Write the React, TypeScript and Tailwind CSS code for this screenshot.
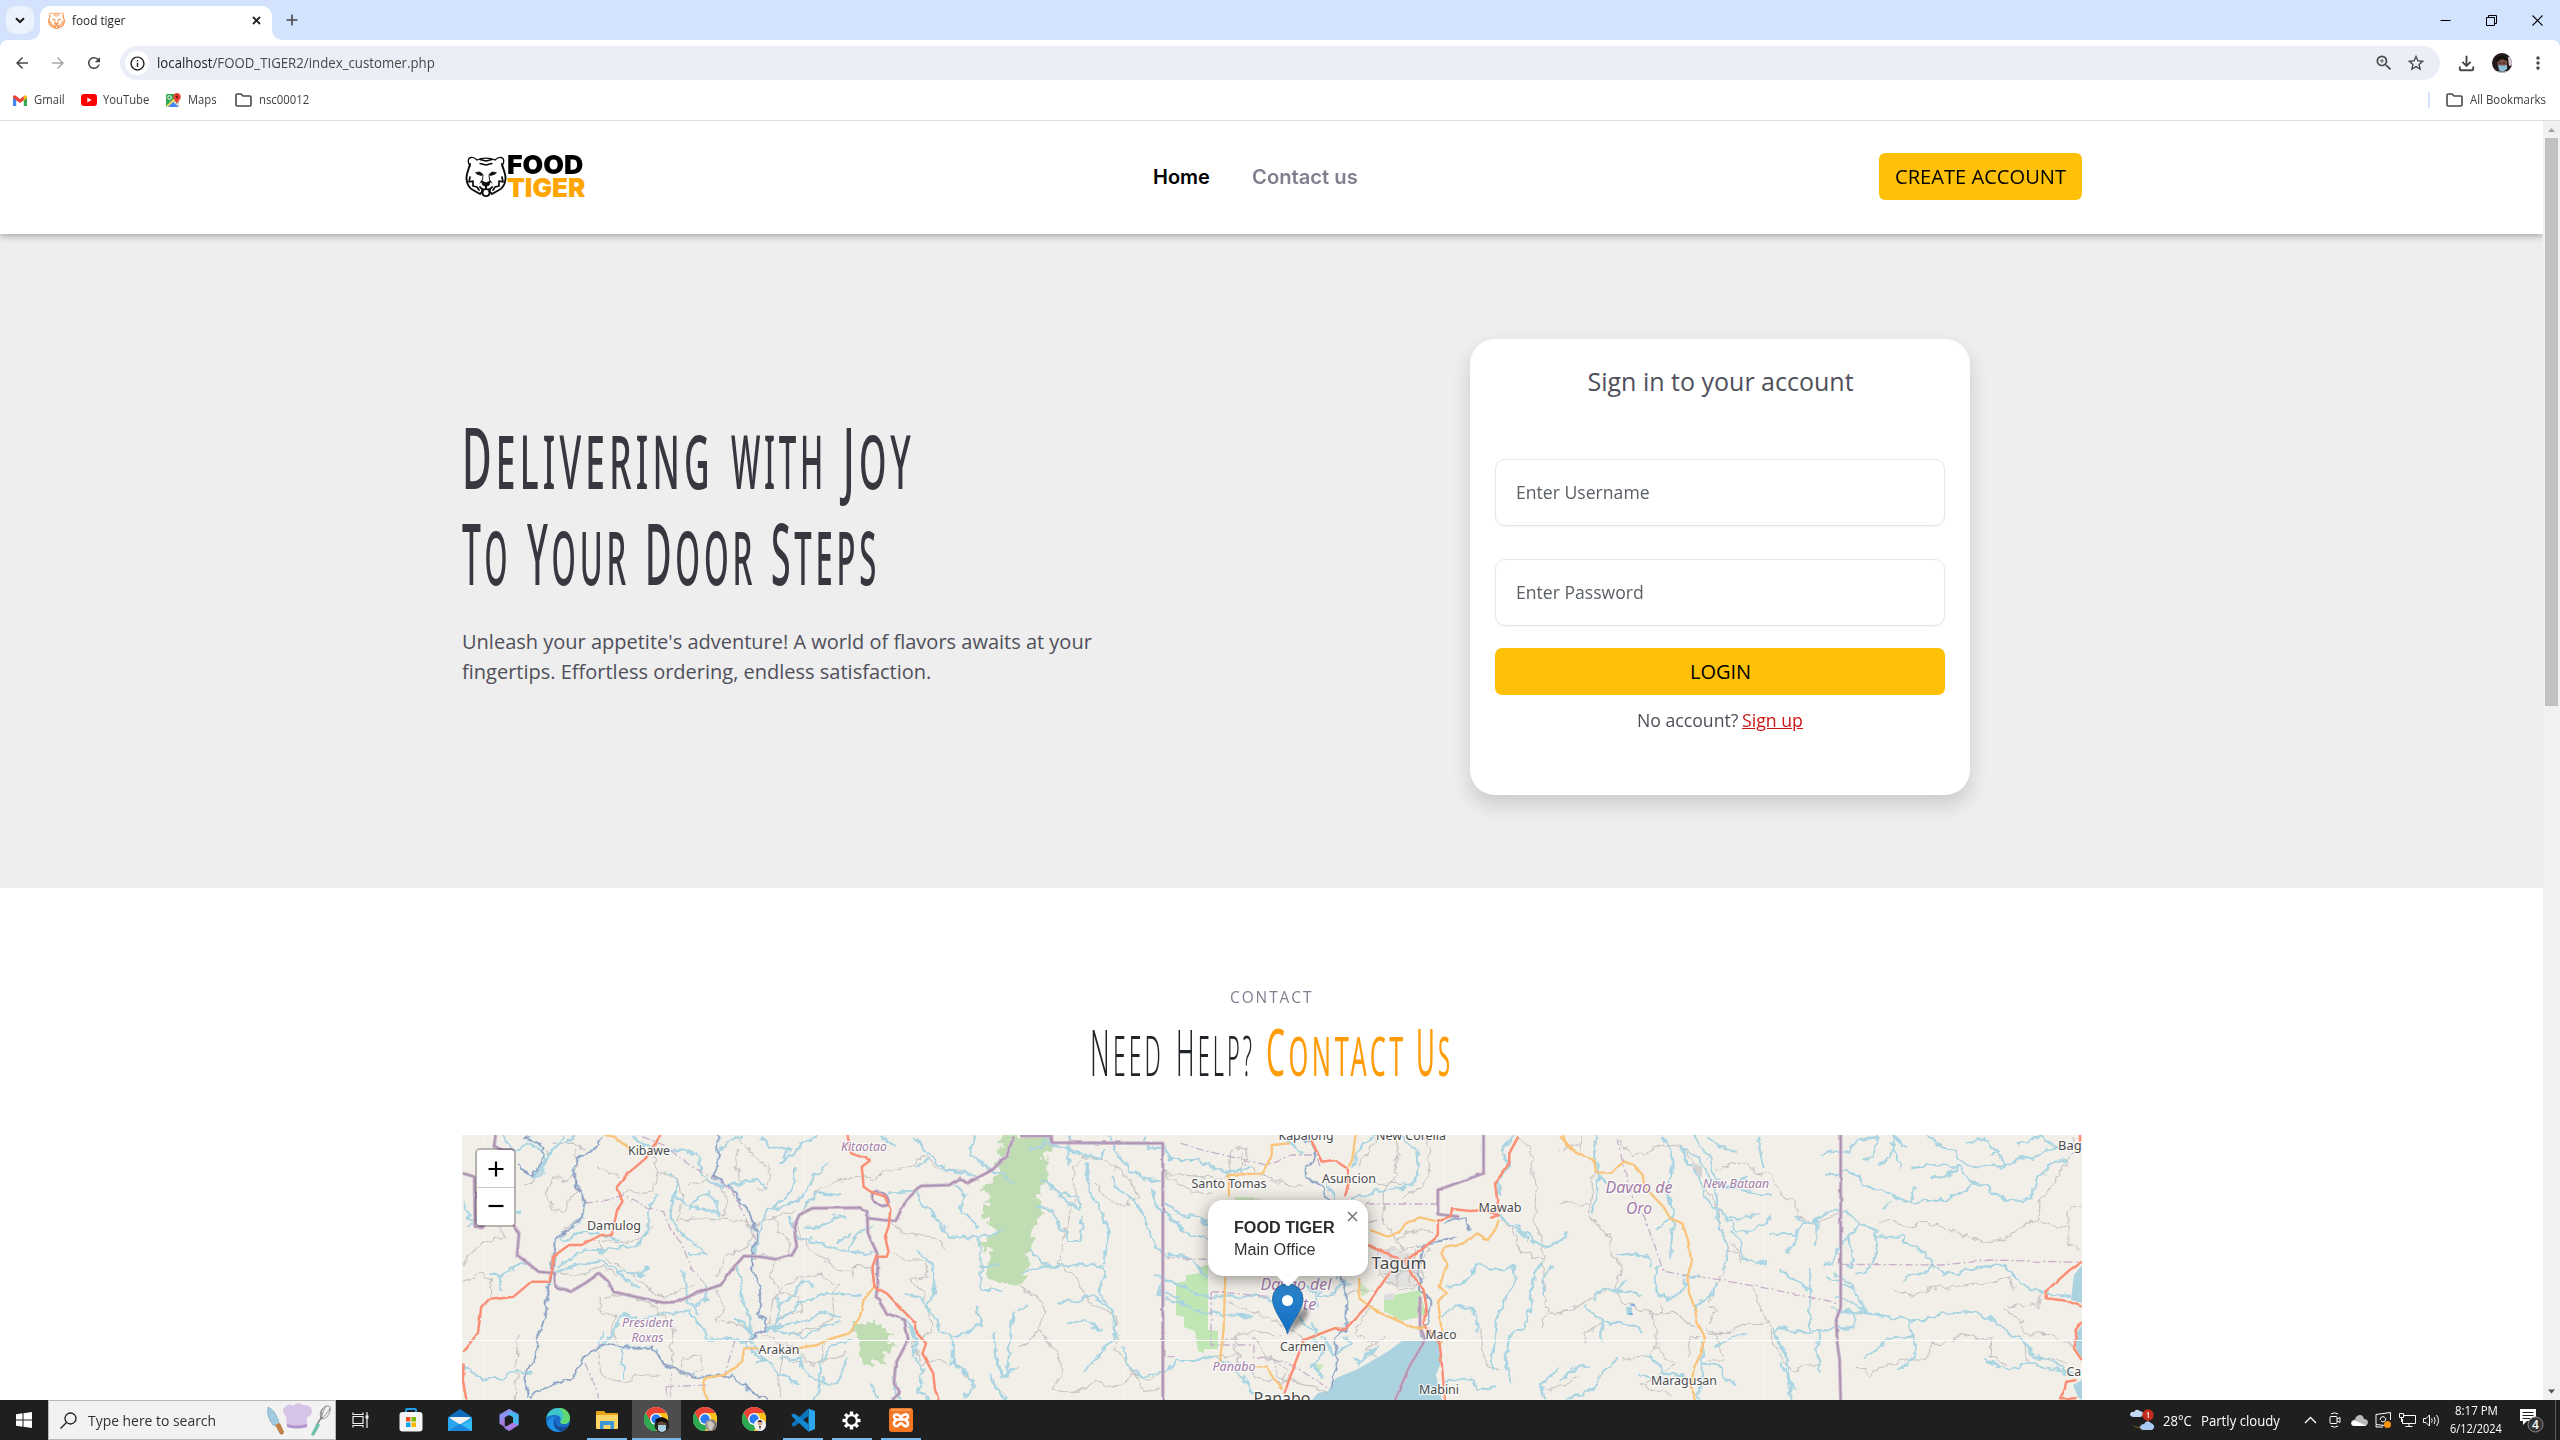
import { useLayoutEffect, useRef, useState, type ReactNode } from "react";
import {
  MdArrowBack,
  MdArrowForward,
  MdRefresh,
  MdStarBorder,
  MdMoreVert,
  MdInfoOutline,
  MdZoomIn,
  MdOutlineFileDownload,
} from "react-icons/md";

/* Text squeezed or stretched horizontally to an exact advance width. */
function Fit({ w, className = "", inner = "", children }: { w: number; className?: string; inner?: string; children: ReactNode }) {
  const ref = useRef<HTMLSpanElement>(null);
  const [s, setS] = useState(1);
  useLayoutEffect(() => {
    if (ref.current && ref.current.offsetWidth) setS(w / ref.current.offsetWidth);
  }, [w]);
  return (
    <span className={"inline-block shrink-0 whitespace-nowrap " + className} style={{ width: w }}>
      <span ref={ref} className={"inline-block origin-left " + inner} style={{ transform: `scaleX(${s})` }}>
        {children}
      </span>
    </span>
  );
}

function TigerHead({ size, color, bold = 1 }: { size: number; color: string; bold?: number }) {
  return (
    <svg width={size} height={size} viewBox="0 0 42 42" fill="none" stroke={color} strokeWidth={1.3 * bold} strokeLinecap="round" strokeLinejoin="round">
      <path d="M5 11C2 6 3 3 6 2.500C9 2 11 4 12 5C17 2.500 25 2.500 30 5C31 4 33 2 36 2.500C39 3 40 6 37 11" />
      <path d="M5 9C4 14 1 19 1.500 24C2 29 4 33 8 35L15 39L18 36M37 9C38 14 41 19 40.500 24C40 29 38 33 34 35L27 39L24 36" strokeWidth={1.9 * bold} />
      <path d="M5 22L4 27L8 26L8 31L12 32L14 35M37 22L38 27L34 26L34 31L30 32L28 35" strokeWidth={1.7 * bold} />
      <path d="M15 4.500L21 6L27 4.500M15 8.500L21 10L27 8.500" />
      <path d="M11 17.500L15 17L18 19.500L16 20.500L12 19ZM31 17.500L27 17L24 19.500L26 20.500L30 19Z" fill={color} strokeWidth={0.8 * bold} />
      <path d="M18 20L17.500 25L15 28M24 20L24.500 25L27 28" strokeWidth={0.9 * bold} />
      <path d="M16.500 26L21 28L25.500 26L24 30L21 31.500L18 30Z" fill={color} strokeWidth={bold} />
      <path d="M21 31V34M15 32C17 35 20 35 21 33.500C22 35 25 35 27 32M17 35L18 40C20 41.500 22 41.500 24 40L25 35" strokeWidth={1.8 * bold} />
    </svg>
  );
}

function FolderIcon({ w = 17 }: { w?: number }) {
  return (
    <svg width={w} height="14" viewBox="0 0 17 14" fill="none" stroke="#474747" strokeWidth="1.6" strokeLinejoin="round">
      <path d="M1 2.200C1 1.500 1.500 1 2.200 1H6L8 3H14.800C15.500 3 16 3.500 16 4.200V11.800C16 12.500 15.500 13 14.800 13H2.200C1.500 13 1 12.500 1 11.800Z" />
    </svg>
  );
}

function BrowserChrome() {
  return (
    <div className="h-[121px] shrink-0 border-b border-[#dfdfdf] bg-[#d3e3fd] font-['Open_Sans',sans-serif] text-[#3c4043]">
      <div className="flex h-10 items-center">
        <div className="ml-[6px] flex h-7 w-7 items-center justify-center rounded-[10px] bg-[#ebf2fe]">
          <svg width="10" height="7" viewBox="0 0 10 7" fill="none" stroke="#1f1f1f" strokeWidth="2">
            <path d="M1 1.200L5 5L9 1.200" />
          </svg>
        </div>
        <svg className="ml-[-4px] mt-auto h-[10px] w-[10px]" viewBox="0 0 10 10">
          <path d="M0 10A10 10 0 0 0 10 0V10Z" fill="#fff" />
        </svg>
        <div className="mt-[6px] flex h-[34px] w-[232px] items-center rounded-t-[10px] bg-white pl-2">
          <div className="mb-[6px]">
            <TigerHead size={17} color="#f68c40" bold={1.4} />
          </div>
          <Fit w={53} className="mb-1 ml-[7px] text-xs leading-4 text-[#1f1f1f]">food tiger</Fit>
          <svg className="mb-[6px] ml-[127px]" width="9" height="9" viewBox="0 0 9 9" stroke="#1f1f1f" strokeWidth="1.8">
            <path d="M1 1L8 8M8 1L1 8" />
          </svg>
        </div>
        <svg className="mt-auto h-[10px] w-[10px]" viewBox="0 0 10 10">
          <path d="M10 10A10 10 0 0 1 0 0V10Z" fill="#fff" />
        </svg>
        <svg className="ml-[4px]" width="12" height="12" viewBox="0 0 12 12" stroke="#474747" strokeWidth="1.6">
          <path d="M6 0.500V11.500M0.500 6H11.500" />
        </svg>
        <div className="ml-auto mr-[17px] flex items-center gap-[35px]">
          <svg width="11" height="11" viewBox="0 0 11 11"><path d="M0.500 5.500H10.500" stroke="#000" /></svg>
          <svg width="11" height="11" viewBox="0 0 11 11" fill="none" stroke="#000">
            <path d="M0.500 2.500H8.500V10.500H0.500ZM2.500 2.500V0.500H10.500V8.500H8.500" />
          </svg>
          <svg width="11" height="11" viewBox="0 0 11 11" stroke="#000" strokeWidth="1.1"><path d="M0.500 0.500L10.500 10.500M10.500 0.500L0.500 10.500" /></svg>
        </div>
      </div>
      <div className="flex h-10 items-center rounded-t-lg bg-white pt-[6px]">
        <MdArrowBack className="ml-[13px] text-[#474747]" size={18} />
        <MdArrowForward className="ml-[18px] text-[#a8a8a8]" size={18} />
        <MdRefresh className="ml-[18px] text-[#474747]" size={18} />
        <div className="ml-[17px] flex h-[34px] w-[2320px] items-center rounded-full bg-[#ebeef7] pl-[5px]">
          <div className="flex h-6 w-6 items-center justify-center rounded-full bg-white">
            <MdInfoOutline size={17} className="text-[#1f1f1f]" />
          </div>
          <Fit w={278} className="ml-[8px] text-sm leading-5 text-[#474747]">
            <span className="text-[#1f1f1f]">localhost</span>/FOOD_TIGER2/index_customer.php
          </Fit>
          <MdZoomIn size={20} className="ml-auto text-[#474747]" />
          <MdStarBorder size={20} className="ml-[12px] mr-[14px] text-[#474747]" />
        </div>
        <MdOutlineFileDownload size={23} className="ml-[15px] text-[#474747]" />
        <svg className="ml-[14px]" width="20" height="20" viewBox="0 0 20 20">
          <clipPath id="face"><circle cx="10" cy="10" r="10" /></clipPath>
          <g clipPath="url(#face)">
            <path d="M0 0H20V20H0Z" fill="#241b1d" />
            <path d="M16 4L20 4V12L17 13Z" fill="#d9c9d4" />
            <path d="M5 7Q10 4 15 7V13H6Z" fill="#7b5145" />
            <path d="M3 5Q10 0 16 6L15 8L10 6L5 9Z" fill="#17110f" />
            <path d="M7 10H9M11 10H13" stroke="#2d1b17" />
            <path d="M6 12Q10 13 15 12L15 16Q11 20 7 17Z" fill="#8fbfd6" />
            <path d="M5 18Q10 19 15 18V20H5Z" fill="#c6dde6" />
          </g>
        </svg>
        <MdMoreVert size={20} className="ml-[16px] text-[#474747]" />
      </div>
      <div className="flex h-10 items-center bg-white text-xs leading-4">
        <svg className="ml-[13px]" width="14" height="11" viewBox="0 0 14 11">
          <path d="M0 1.500V11H3.200V3Z" fill="#4285f4" />
          <path d="M14 1.500V11H10.800V3Z" fill="#34a853" />
          <path d="M14 1.500Q13 -0.500 10.800 1V5.500L14 3Z" fill="#fbbc04" />
          <path d="M0 1.500Q1 -0.500 3.200 1L7 4L10.800 1V5.200L7 8L3.200 5.200L0 3Z" fill="#ea4335" />
        </svg>
        <Fit w={31} className="ml-[7px]">Gmail</Fit>
        <svg className="ml-4" width="16" height="12" viewBox="0 0 16 12">
          <rect width="16" height="12" rx="3" fill="#f00" />
          <path d="M6.300 3.500V8.500L10.500 6Z" fill="#fff" />
        </svg>
        <Fit w={46} className="ml-[6px]">YouTube</Fit>
        <svg className="ml-[17px]" width="15" height="15" viewBox="0 0 15 15">
          <rect y="1" width="13" height="13" rx="1.500" fill="#34a853" />
          <path d="M0 14L13 2V14Z" fill="#c6d7cf" />
          <path d="M0 13L10 3.500L12 5L3 14Z" fill="#f6d76b" />
          <path d="M2 14L7 9L12.500 14Z" fill="#4285f4" />
          <circle cx="3.500" cy="4.500" r="1.800" fill="none" stroke="#fff" />
          <path d="M11 0A3.800 3.800 0 0 1 14.800 4C14.800 6.500 12 8 11 11C10 8 7.200 6.500 7.200 4A3.800 3.800 0 0 1 11 0Z" fill="#ea4335" />
          <circle cx="11" cy="4" r="1.400" fill="#811411" />
        </svg>
        <Fit w={29} className="ml-[7px]">Maps</Fit>
        <span className="ml-[18px]"><FolderIcon /></span>
        <Fit w={50} className="ml-[7px]">nsc00012</Fit>
        <div className="ml-auto h-4 w-[2px] rounded bg-[#d3e3fd]" />
        <span className="ml-4"><FolderIcon /></span>
        <Fit w={76} className="ml-[7px] mr-[14px]">All Bookmarks</Fit>
      </div>
    </div>
  );
}

function SiteHeader() {
  return (
    <header className="relative z-10 flex h-[113px] shrink-0 items-center bg-white pb-[2px] pl-[465px] shadow-[0_2px_7px_rgba(0,0,0,0.32)]">
      <div className="flex items-center">
        <div className="mt-[-1px]"><TigerHead size={42} color="#0a0a0a" /></div>
        <div className="mt-[-1px] flex flex-col font-[Inter,sans-serif] text-[26px] font-black leading-[23px]">
          <Fit w={76} className="text-black">FOOD</Fit>
          <Fit w={78} className="text-[#ffa500]">TIGER</Fit>
        </div>
      </div>
      <nav className="ml-[568px] flex items-center font-[Inter,sans-serif] text-xl font-semibold">
        <Fit w={57} className="text-black">Home</Fit>
        <Fit w={106} className="ml-[42px] text-[#7f7f90]">Contact us</Fit>
      </nav>
      <button className="ml-[521px] flex h-[47px] w-[203px] items-center justify-center rounded-md bg-[#ffc107] font-['Open_Sans',sans-serif] text-xl text-black">
        <Fit w={171}>CREATE ACCOUNT</Fit>
      </button>
    </header>
  );
}

/* One word of the narrow hand-lettered headings. */
function HeroWord({ w, ml, big, children }: { w: number; ml: number; big?: boolean; children: string }) {
  return (
    <span style={{ marginLeft: ml }}>
      <Fit w={w} inner={big ? "first-letter:text-[85px] first-letter:leading-[0]" : ""}>{children}</Fit>
    </span>
  );
}

function HelpWord({ w, ml, children }: { w: number; ml: number; children: string }) {
  return (
    <span className="shrink-0" style={{ marginLeft: ml }}>
      <Fit w={w} inner="first-letter:text-[65px] first-letter:leading-[0]">{children}</Fit>
    </span>
  );
}

function Hero() {
  return (
    <section className="flex h-[654px] shrink-0 items-start bg-[#eeeeee] font-['Open_Sans',sans-serif]">
      <div className="ml-[462px] mt-[179px] w-[1008px]">
        <h1 className="font-['Noto_Sans',sans-serif] text-[74px] font-medium uppercase leading-[96px] tracking-[0.12em] text-[#37373f]">
          <span className="flex h-24 items-baseline">
            <HeroWord w={252} ml={0} big>Delivering</HeroWord>
            <HeroWord w={96} ml={17}>with</HeroWord>
            <HeroWord w={72} ml={16} big>Joy</HeroWord>
          </span>
          <span className="flex h-24 items-baseline">
            <HeroWord w={49} ml={0} big>To</HeroWord>
            <HeroWord w={103} ml={16} big>Your</HeroWord>
            <HeroWord w={111} ml={15} big>Door</HeroWord>
            <HeroWord w={109} ml={15} big>Steps</HeroWord>
          </span>
        </h1>
        <p className="mt-[22px] flex flex-col text-xl leading-[30px] text-[#4f4f5a]">
          <Fit w={630}>Unleash your appetite's adventure! A world of flavors awaits at your</Fit>
          <Fit w={469}>fingertips. Effortless ordering, endless satisfaction.</Fit>
        </p>
      </div>
      <div className="mt-[105px] flex h-[456px] w-[500px] flex-col items-center rounded-[25px] bg-white px-[25px] text-[#4f4f5a] shadow-[0_10px_20px_rgba(0,0,0,0.15)]">
        <h2 className="mt-[23px] h-[38px] text-[25px] leading-[38px]"><Fit w={266} className="ml-[1px]">Sign in to your account</Fit></h2>
        <div className="mt-[59px] flex h-[67px] w-full items-center rounded-[10px] border border-[#e6e6ea] pb-[2px] pl-[20px] text-lg text-[#5b6066] shadow-[0_1px_2px_rgba(0,0,0,0.04)]">
          <Fit w={134}>Enter Username</Fit>
        </div>
        <div className="mt-[33px] flex h-[67px] w-full items-center rounded-[10px] border border-[#e6e6ea] pb-[2px] pl-[20px] text-lg text-[#5b6066] shadow-[0_1px_2px_rgba(0,0,0,0.04)]">
          <Fit w={128}>Enter Password</Fit>
        </div>
        <button className="mt-[22px] flex h-[47px] w-full shrink-0 items-center justify-center rounded-[7px] bg-[#ffc107] text-xl text-black">
          <Fit w={61} className="ml-[1px]">LOGIN</Fit>
        </button>
        <div className="mt-[12px] flex gap-[4px] text-lg leading-[27px]">
          <Fit w={101}>No account?</Fit>
          <Fit w={61} className="text-[#cc1616]" inner="underline">Sign up</Fit>
        </div>
      </div>
    </section>
  );
}

const LEFT = {
  river: [
    "M120 20L140 50L160 60L190 40L230 60L240 90L210 135M260 60L240 90L230 130L200 145M290 20L260 60M320 20L290 40",
    "M10 210L20 260L50 270L20 290M165 250V245M270 320L290 330L340 305L390 310M440 330L390 310",
    "M490 20L520 50L560 60L600 55L660 70L680 130L700 150M790 20L750 40L730 60M840 20L860 50L920 60L900 100L960 40L1000 20",
    "M700 150L740 170L790 155L830 150L860 175M550 195L530 230L525 300L500 345L450 350L390 365L350 350L320 385L275 405",
    "M590 130L610 165L595 200L590 260L620 310L660 340L690 375L640 370M600 200L650 230L690 240L730 255L700 185L670 200L640 240",
    "M270 425L320 410L390 395L440 420L510 435L520 410M440 420L470 460L500 475M620 420L640 520L665 550M690 470L690 510L660 530",
    "M190 395L140 420L110 440L120 480M85 435L120 435M10 705L60 745L120 745L160 720L200 730",
    "M1030 100L990 140L960 200L900 235L860 240L830 330L820 390M940 115L930 180L880 230M1070 195L1000 190L960 230",
    "M920 260L940 320L990 335L1040 350L1080 365L1160 370M970 290L1010 290L1050 260L1080 260M1090 310L1060 340M1160 290L1110 310L1090 360",
    "M860 600L900 585L960 575L1010 550L1060 560M860 600L910 560L950 520L1000 500L1060 490L1120 500M880 600L920 610L970 620L1010 590L1060 575",
    "M890 530L920 510L960 450L990 465M880 600L895 540L890 500M780 400L790 500L810 560L820 620M775 570L810 590L820 640",
    "M400 650L430 600L460 555L510 570L560 550L600 550L640 540L680 600L700 630L760 620L800 640",
    "M390 650L400 610M450 660L460 745M800 640L830 680L870 700L890 730L950 760M900 690L950 680L960 720L1010 760",
    "M1280 360L1320 400L1330 470L1310 530L1350 600L1380 630L1380 700L1420 730L1440 770L1410 805M1450 530L1460 580L1440 600L1380 620M1250 490L1300 510L1310 550",
    "M1200 190L1280 180L1290 220L1340 270L1370 320L1450 320L1460 380L1460 480L1510 480M1390 170L1420 200L1400 230L1450 290M1520 300L1480 320L1450 320M1450 410L1510 400",
    "M1440 20L1430 70L1460 100L1500 130L1550 155M1270 20L1300 60L1350 110L1440 140M1310 90L1280 110M1180 20L1220 50",
    "M1250 570L1280 630L1270 680L1300 720L1280 780L1310 805M1490 610L1500 680L1520 740L1560 710M1485 730L1500 770L1530 805M1550 550L1540 650L1530 740",
    "M1090 630L1040 650L1010 700L1010 760L1060 760L1080 690M1020 750L990 805M820 650L850 690L830 700M1150 760L1170 805M1210 740L1230 805",
  ],
  indigo: [
    "M400 30L370 60L330 90L315 125L330 170L350 210L340 270L290 310L265 330L260 430L245 480L240 560L220 610L210 690L180 740L190 800",
    "M200 800L250 765L310 750L350 680L400 645L460 650L540 650L570 700L620 725L680 745L760 735L810 780L860 805",
    "M720 20L722 100L710 140L760 175L800 230L830 310L820 360L815 420L840 480L840 550L860 590L800 640M180 20L235 50L225 100L200 140L160 105",
  ],
  gray: [
    "M10 400L40 360L80 330L130 325L110 290M10 460L60 430L85 450L90 510M250 60L240 100L210 150L180 170M350 60L320 40L260 40M320 60L330 110L300 150L260 140L240 190L260 240L300 240L310 200L340 180",
    "M380 105L440 140M540 80L550 120L610 150L620 200L610 270L700 265L780 270L820 290L880 260L940 240M550 120L540 180L450 190M640 170L690 150L730 170L750 210L740 260",
    "M770 20L810 60L870 130L860 180L830 180M780 60L770 110L790 150M330 270L290 300M390 330L400 380L460 420L500 450L560 500L600 490L650 460",
    "M400 330L450 340L500 330L540 290M270 425L340 435L400 410L440 440M390 500L390 540L440 560L420 600L450 640M400 505L470 490L530 520L580 570L600 600L590 650L600 720L640 740",
    "M620 710L630 685L670 680L680 710L650 740M590 735L590 800M720 480L740 530L715 570L760 580L800 590M820 300L810 350L740 380L720 440M880 260L890 300L925 330L920 370L890 395L850 370L820 390",
    "M1150 150L1200 120L1260 110L1300 80L1350 120L1400 120L1450 150M960 240L1000 180L1080 145L1150 140M940 280L970 340L990 370L1060 420L1100 430",
    "M850 600L900 560L960 540L950 500L900 490L870 440L880 400M1040 460L1010 430L950 440L900 480L880 510L860 590M1060 460L1040 500L1050 560L1000 590L920 620",
    "M1210 280L1250 310L1310 320L1360 350M1210 370L1240 390L1300 390L1310 440L1260 450L1290 480L1310 530L1320 600M1100 440L1100 410L1150 410L1155 450M840 610L900 640L910 690L890 740L900 800",
    "M910 640L960 680L990 710L1010 690L1020 640M910 690L1000 700L1080 670M1320 600L1270 640L1290 700L1340 690L1400 710L1420 740M390 690L400 740L460 760L500 735L560 740M390 690L390 640L350 680M160 620L155 805",
  ],
  dash: [
    "M350 220L410 210L460 195L520 230L570 245L590 300L620 340L650 420L690 465M770 630L750 700L740 740M580 770L690 765M580 770L580 805M350 700L380 770L385 805M510 20L570 45L630 95L650 110L720 150L760 180M760 180L830 330",
  ],
  red: [
    "M562 15L520 85L470 130L440 170L455 215L440 240L425 315L395 315L340 345L305 345L260 380L258 420L250 455L200 455L150 500L80 510L60 530L50 610L8 665M10 700L8 750L18 810",
    "M1085 15L1095 70L1150 90L1125 110L1130 170L1150 185L1190 200L1205 240L1200 290L1190 320L1200 365L1195 380L1165 380L1155 410L1160 470L1195 490L1230 530L1275 580L1280 610L1305 640L1295 670L1325 730L1330 780L1340 810",
  ],
  orange: ["M405 15L430 20L480 60M1160 470L1130 510L1120 560L1090 610L1040 625L1000 645L945 655M835 655L795 655L790 695L740 735L680 745L685 790L695 810"],
  purple: [
    "M8 130L40 140L42 290L70 290M150 285L165 310L160 375L220 425L265 430L268 470L310 485L350 460L390 430L415 455L430 485L490 500L570 518L610 515L660 490L730 465L760 420L795 378L840 380L885 388L930 375L943 350L935 290L950 255L985 235L1120 233L1140 245L1142 310L1168 370L1170 460L1165 500L1195 550L1245 570L1255 630L1220 700L1215 760L1230 790L1210 810",
    "M1142 265L1185 270L1220 272L1250 210L1290 168L1370 165L1400 145L1420 160L1490 120L1530 80L1550 20M1200 220C1180 240 1150 215 1155 190C1170 175 1200 190 1200 220M100 15L95 50L120 60L150 60",
  ],
};

const MID = {
  river: [
    "M20 60L60 50L80 20M140 20L135 60L140 105M80 40L130 60L190 75L230 85L235 60M250 20L270 70L310 120L350 150L400 155M190 100L190 150L200 200L230 240L250 300L240 370L230 400M60 150L110 190L130 220L170 240L160 200L120 190",
    "M50 230L90 240L110 290L140 330L170 330L175 260M110 410L60 400L30 365M110 410L160 400L230 410L240 440L220 480L260 550L270 610L240 650L210 690L180 720M260 140L265 170L320 210L350 260L360 310L400 370L470 380L520 440",
    "M10 430L50 410L110 410M110 515L170 510L200 490L260 540M130 580L180 570L230 600M0 540L20 530M350 20L360 60L400 50L420 90L500 90L580 130L650 110M370 180L380 230L420 260L480 320L530 325M410 220L460 260L500 260L530 290",
    "M380 430L450 470L480 480L510 500L600 500L690 500L720 540M410 510L460 520L500 545L570 555L650 560M400 440L390 490L450 500M290 650L300 700L340 740L410 725L440 690L500 690L540 680L600 710L620 740L650 790",
    "M730 20L770 50L790 70M1000 20L960 40L930 110M1065 20L1110 60L1115 130L1100 165L1030 180L990 185L930 205M1380 20L1350 60L1370 110L1340 140L1340 200M840 460L840 500L880 490L900 450L920 460",
    "M850 620L870 680L930 640L910 620M820 580L830 630L850 670L820 710L850 740M930 680L950 700L1000 650M1330 250L1380 290L1430 320L1450 350L1500 340L1530 310M1390 280L1420 330M1200 470L1240 460L1280 400L1320 420L1380 410L1390 460L1350 520L1330 580L1320 710",
    "M1460 400L1440 430L1430 510L1420 580L1370 620L1360 680L1375 760M1490 410L1460 450L1470 490M1180 560L1220 530L1260 530L1285 580L1280 605M1190 760L1230 745L1270 750L1275 780L1330 775M1510 710L1490 740L1460 760L1470 805",
    "M800 470L830 480L830 530M780 560L800 590L820 600M860 160L880 200L890 440",
  ],
  indigo: [
    "M790 20L820 50L830 80L795 110L800 140L850 170L860 210M1260 300L1250 270L1210 265L1190 280",
    "M900 440L915 500L910 590L880 640L890 700L870 770M1220 330L1170 330L1130 350L1115 410L1120 480L1150 520L1140 580L1120 600L1135 630",
  ],
  gray: [
    "M150 110L180 80L240 90L310 150L330 200L290 230L240 200L210 160M150 110L155 200L135 270L120 330L110 400L150 440L200 520L270 560L270 660L320 730L360 750L420 720M410 120L420 150L480 180L530 190M590 60L585 130L560 145L410 130",
    "M600 50L640 60L630 100L690 140L730 150M700 150L790 170M620 70L620 130M630 210L680 210M940 160L1020 160L1080 160M950 100L980 50L1000 30M1050 20L1060 60L1050 140L1020 180L1020 280L1050 330L1080 360M980 210L940 260L960 310",
    "M1130 20L1150 60L1145 120L1130 170L1070 200M1390 30L1430 50L1430 100L1450 180L1440 260L1460 330L1465 400L1475 540L1460 600M1160 310L1130 300L1080 310L1060 330M1340 260L1380 300L1400 360L1460 390",
    "M570 510L700 570L750 595L800 625M650 620L700 690L750 720L730 760M600 620L610 690L660 740L730 760M560 640L600 620L650 600L730 620M600 720L620 670L560 680L480 690M0 470L60 510L70 550L50 600L100 660L120 720L90 780L150 790",
    "M150 790L210 750L250 770L290 760L320 730L350 790L400 770M50 600L20 640L0 650M990 520L960 560L940 610L990 640M1020 620L970 660L1000 680M1480 550L1540 540L1560 520M1290 600L1300 700L1340 720M1470 780L1520 770L1560 740",
    "M700 680L720 740L800 760L860 790M920 490L960 480L1000 490L1010 460M1000 400L1010 440L1060 480L1110 470L1130 440L1120 390L1150 360L1110 350L1060 360L1000 360ZM1030 360L1060 440M1080 370L1050 470M1010 410L1120 430M1110 360L1090 460M1000 440L1070 420",
  ],
  dash: [
    "M450 40L510 60L570 75L690 105L760 75L830 75L840 110M410 385L530 388M970 222L1170 222M535 485V645H655V680L710 685L770 710L870 780M535 485L600 490L700 500M410 680H440M1000 270L940 290",
  ],
  red: [
    "M815 30L845 95L880 90L915 115L920 160L910 200M975 345L1075 395L1140 345L1170 315V275L1205 260L1210 237L1260 243L1300 240L1340 255L1315 265M1340 240L1330 160L1370 100L1370 70L1395 20",
    "M1080 400L1100 440L1130 480L1138 530L1130 580L1150 610L1175 640L1180 690L1190 810M1040 420L970 530L910 598L880 595L795 630L770 700L740 790",
  ],
  orange: [
    "M755 40L705 45V75L680 130L585 135V200M575 440L570 600L560 695M660 712H690L710 745L735 775M940 10L930 90L920 110M950 445L950 505L1000 545L1100 592H1140M980 300L1030 320L1060 310L1080 280L1120 262L1170 275",
    "M1340 270L1330 300L1310 330L1280 310L1245 340L1190 350L1180 370L1195 400L1175 470L1195 490L1170 510L1180 600L1180 640M1520 15L1530 45L1568 75",
  ],
  purple: ["M0 18L88 18L90 38L400 40V810M1298 15V130L1170 180V253L1230 260M1135 630L1090 710L1050 810M1135 630L1120 590V500"],
};

const RIGHT = {
  river: [
    "M105 20L100 70L110 120L110 170L95 250M110 140L140 160M300 20L330 80L315 150L320 210L330 260L325 320L320 380M330 260L280 300M350 50L370 100L410 150L420 200L450 240L470 310L490 350L480 400L470 420M350 50L400 80L440 150L460 220",
    "M390 20L430 80L445 130L470 170L610 195M430 20L460 45L510 65M575 20L585 90L595 110M450 230L490 265L540 265L580 250M610 260L570 300L520 305L480 265M500 300L525 340L530 385L600 400M545 135L500 170L470 170",
    "M165 375L220 370L260 385L265 410M285 410L275 480L310 510L350 490L365 455M360 440L400 440M450 460L440 500L390 520L400 545M100 510L120 475L170 480L195 450M120 575L180 580L230 590L240 605M70 530L120 570L120 630M150 480L235 490",
    "M620 610L640 590L700 610L730 605L790 600L800 590L850 595L860 550L810 540M730 420L725 600M750 610L745 660L755 730M640 420L680 450L730 485M610 312L680 312L710 280L750 265L790 240L830 245L870 280L915 300",
    "M690 310L680 340L660 370M745 265L745 310L740 345M680 255L710 280M915 300L920 320L995 320L1000 335L1060 365L1080 400L1120 435L1160 425L1240 410L1280 405L1320 435L1340 465L1400 485L1480 500M920 320L910 400L880 435L860 430M870 280L840 320L850 410L830 412M840 320L810 350L790 400L770 400M1080 400L1060 430L1000 445",
    "M770 140L830 120L870 140L880 165L950 190L1010 220L1060 210L1120 210L1180 180L1195 160L1160 110L1080 105L1020 115M1195 160L1240 170L1300 215L1370 205L1385 150L1430 100L1470 90M1030 175L1020 210M960 215L940 230M1160 110L1120 140L1080 138",
    "M760 75L790 65L840 65L860 35L920 20M920 20L910 85L880 90M930 100L960 80L970 20L1000 50M960 40L990 110M1070 20L1100 45L1150 60L1160 90L1210 110L1290 110L1350 80L1370 90L1390 70L1440 50L1400 20L1330 40M1180 40L1230 25L1270 60L1250 80M1290 110L1270 60",
    "M800 500L860 520L890 550L960 560L1020 575L1090 565L1110 545L1140 550L1200 545L1240 560L1290 600L1350 640L1380 680L1430 690L1470 730M800 430L850 465L865 500L890 550M780 445L860 480M795 535L820 550L890 550M1015 575L1025 620L1035 660L1010 700L980 715M1020 620L960 625L930 650L885 685",
    "M1230 690L1300 715L1370 700L1430 720L1500 730M640 640L660 690L670 810M620 590L640 650M640 700L680 780M450 650L480 630L540 610M410 700L460 705L480 750L510 762M0 750L50 710L80 710M160 690L130 720L100 770L50 800L20 805M250 675L290 710L300 730L370 740M230 735L300 750M415 640L410 740L400 805",
  ],
  indigo: [],
  gray: [
    "M100 30L95 150L85 260L150 330L155 380L180 410L160 470L160 480L110 490L70 520L0 550M0 215L50 225L85 225M0 60L55 40M65 20L60 60M170 30L210 80L240 75L290 50L350 45L380 90L410 160L455 220L465 300L490 340L475 440L450 470L430 530L460 540L430 580",
    "M455 120L500 100L540 100L570 130L615 135L640 190L680 220L690 260L750 280L810 250M490 360L520 370L525 400M500 340L520 360M560 460L580 530L610 580L620 640L650 700L690 725L710 705L750 705",
    "M430 610L490 610L540 580L610 580M290 520L300 550L340 550L360 570L400 600M160 480L190 520L260 545L300 545M265 545L280 600L275 650L330 700L300 730L240 760L260 780L320 790M185 690L250 675L290 650M70 640L75 610L120 580",
    "M860 710L880 710L900 740L930 710L1010 690L1060 690L1080 640L1120 640L1170 610L1220 625L1250 620L1250 680L1290 700M930 270L970 275L1015 295L1060 275L1120 300L1200 325L1230 340L1290 325L1340 290L1390 265L1395 210L1440 150L1460 110L1500 60L1490 20M1390 265L1440 290L1470 290",
    "M1510 225L1475 240L1475 340L1510 365M970 485L1030 500L1080 475L1200 465L1260 455L1305 440L1320 480M1300 530L1390 525L1400 490M1290 540L1340 570L1350 610L1430 615L1500 650M1390 690L1430 680L1470 700M1350 640L1355 700M430 690L470 690L460 620L430 600M370 620L410 620M370 620L380 680",
  ],
  dash: ["M165 25L185 110L210 200L245 260L300 423L370 437L440 445L600 475L815 520M815 403L1110 405L1250 390L1510 397"],
  red: ["M1515 395L1480 420L1410 485V505L1470 512L1515 530M1515 575L1497 600L1500 630L1492 655L1515 690M1500 750L1470 755L1465 780L1452 805H1500M1510 15V35"],
  orange: ["M0 20L40 60L100 95L105 128H150L185 95L215 105L240 135L245 170L300 230L320 265L355 280L372 330L382 400L370 440L375 490L390 530L400 580L418 615L412 665L390 710L380 770L395 810"],
  purple: ["M815 15V530L802 570L805 640L812 690L815 810"],
};

function Sheet({ d, t }: { d: typeof LEFT; t: string }) {
  const set = (paths: string[], stroke: string, width: number, dash?: string) =>
    paths.map((p, i) => (
      <path key={stroke + i} d={p} stroke={stroke} strokeWidth={width} strokeDasharray={dash} vectorEffect="non-scaling-stroke" />
    ));
  return (
    <>
      <g filter="url(#wiggle)">
        <g transform={t} fill="none" strokeLinejoin="round" strokeLinecap="round">
          {set(d.gray, "#c8c6c5", 1.2)}
          {set(d.river, "#a9d4e2", 2.2)}
          {set(d.indigo, "#a9d4e2", 2.6)}
          {set(d.indigo, "#9b9bbf", 1.4)}
        </g>
      </g>
      <g filter="url(#soft)">
        <g transform={t} fill="none" strokeLinejoin="round">
          {set(d.dash, "#c8aeca", 1.3, "8 3 2 3")}
          {set(d.purple, "#ccb8cc", 3.6)}
          {set(d.purple, "#ab90b1", 1.5)}
          {set(d.orange, "#f9c57c", 2.3)}
          {set(d.red, "#fb8f75", 2.5)}
        </g>
      </g>
    </>
  );
}

type Label = [string, number, number, number, number, ("i" | "s")?];
const LABELS: Label[] = [
  ["Kibawe", 187, 16, 42, 13],
  ["Kitaotao", 402, 12, 46, 12.5, "i"],
  ["Damulog", 152, 91, 54, 13],
  ["President", 185.5, 188, 51, 12.5, "i"],
  ["Roxas", 185.5, 203, 32, 12.5, "i"],
  ["Arakan", 317, 215, 41, 13],
  ["Santo Tomas", 767, 49, 75, 13],
  ["Kapalong", 844, 1, 55, 13],
  ["Asuncion", 887, 44, 54, 13],
  ["New Corella", 949, 1, 70, 13],
  ["Mawab", 1038, 73, 43, 13],
  ["Tagum", 937, 128, 55, 17],
  ["Davao del", 834, 150, 71, 15.5, "i"],
  ["Norte", 834, 170, 41, 15.5, "i"],
  ["Carmen", 841, 212, 46, 13],
  ["Panabo", 772, 232, 43, 12.5, "i"],
  ["Maco", 979, 200, 31, 13],
  ["Mabini", 977, 255, 40, 13],
  ["Panabo", 820, 263, 57, 17],
  ["Davao de", 1177, 53, 67, 15.5, "i"],
  ["Oro", 1177, 74, 26, 15.5, "i"],
  ["New Bataan", 1274, 49, 66, 12.5, "i"],
  ["Maragusan", 1222, 246, 66, 13],
  ["Baganga", 1623, 11, 54, 13],
  ["Caraga", 1625, 237, 41, 13],
];

function MapDrawing() {
  return (
    <svg className="block" width="1620" height="265" viewBox="0 0 1620 265">
      <defs>
        <filter id="wiggle" x="0" y="0" width="1620" height="265" filterUnits="userSpaceOnUse">
          <feTurbulence type="fractalNoise" baseFrequency="0.11" numOctaves="2" seed="4" />
          <feDisplacementMap in="SourceGraphic" scale="9" xChannelSelector="R" yChannelSelector="G" />
        </filter>
        <filter id="soft" x="0" y="0" width="1620" height="265" filterUnits="userSpaceOnUse">
          <feTurbulence type="fractalNoise" baseFrequency="0.1" numOctaves="1" seed="6" />
          <feDisplacementMap in="SourceGraphic" scale="3" xChannelSelector="R" yChannelSelector="G" />
        </filter>
        <filter id="jag" x="0" y="-10" width="1620" height="290" filterUnits="userSpaceOnUse">
          <feTurbulence type="fractalNoise" baseFrequency="0.12" numOctaves="2" seed="9" />
          <feDisplacementMap in="SourceGraphic" scale="16" xChannelSelector="R" yChannelSelector="G" />
        </filter>
        <linearGradient id="pin" x1="0" y1="0" x2="0" y2="1">
          <stop offset="0" stopColor="#2e85cb" />
          <stop offset="1" stopColor="#126fc6" />
        </linearGradient>
        <filter id="blur" x="-50%" y="-50%" width="200%" height="200%"><feGaussianBlur stdDeviation="2" /></filter>
      </defs>
      <path d="M0 0H1620V265H0Z" fill="#f2efe9" />
      <g filter="url(#jag)" fill="#c0dcb3">
        <path d="M541 0H590L590 12L582 20L586 40L577 58L580 80L570 95L568 115L565 145L552 152L535 145L524 140L530 118L516 112L532 98L520 75L528 58L518 56L535 38Z" />
        <path d="M388 187L415 188L420 195L432 198L425 206L438 212L420 218L423 230L412 228L402 225L394 215L396 205Z" />
      </g>
      <g fill="#bfe6b3">
        <path d="M714 148L724 146V140L738 138V132L746 130V195L756 196V214L742 214V218L736 216L733 196L722 192V182L714 180Z" />
        <path d="M922 162L958 155L964 180L940 186L922 176Z" />
        <path d="M773 62H792V66H773ZM896 145L908 156L900 162ZM850 228L862 230L856 238Z" opacity=".8" />
        <path d="M922 160L932 158V165H922Z" fill="#dcdcdc" />
      </g>
      <g fill="#aad3df">
        <path d="M962 205H978L980 225L974 240L980 265H850L856 258L866 256L874 243L896 234L925 217L940 206Z" />
        <path d="M1620 130L1612 140L1609 165L1620 168ZM1620 190L1613 200L1615 220L1620 222ZM1620 245L1611 250L1616 262L1620 265Z" />
      </g>
      <g fill="#ddd" opacity=".8">
        <path d="M918 115L950 118L960 135L950 152L935 153L924 143L914 128Z" />
        <path d="M1232 28L1240 32V42L1234 40Z" fill="#ccc" />
      </g>
      <Sheet d={LEFT} t="translate(-2 -5) scale(.357143 .333333)" />
      <Sheet d={MID} t="translate(558 -5) scale(.357143 .333333)" />
      <Sheet d={RIGHT} t="translate(1098 -5) scale(.344388 .333333)" />
      <path d="M1164 172H1170V180H1165Z" fill="#a8d3e2" />
      <path d="M1168 170H1173M1167 179H1171" stroke="#3a8cf0" />
      <path d="M0 205.500H1620" stroke="#fff" />
      <path d="M22.500 0V265M342.500 0V265M662.500 0V265M982.500 0V265M1302.500 0V265" stroke="#fff" opacity=".25" />
      <g fontFamily="'Noto Sans', sans-serif" textAnchor="middle" paintOrder="stroke" strokeLinejoin="round" stroke="#fff" strokeOpacity=".75" strokeWidth="2.5">
        {LABELS.map(([s, x, y, w, size, kind], i) => (
          <text key={i} x={x} y={y + size * 0.33} textLength={w} lengthAdjust="spacingAndGlyphs" fontSize={size} fill={kind ? "#a37ba7" : "#4a4a4a"} fontStyle={kind ? "italic" : "normal"}>
            {s}
          </text>
        ))}
      </g>
      <path d="M826 199L842 186Q850 176 843 172L832 180Z" fill="#000" opacity=".4" filter="url(#blur)" />
      <path d="M825.500 199C824 190 810.500 176 810.500 164A15.200 15.200 0 0 1 841 164C841 176 827 190 825.500 199Z" fill="url(#pin)" stroke="#2a6da6" strokeWidth="1" />
      <circle cx="825.500" cy="165.500" r="5.500" fill="#fff" />
    </svg>
  );
}

function ContactSection() {
  return (
    <section className="flex min-h-0 flex-1 flex-col items-center overflow-hidden bg-white">
      <div className="mt-[97px] h-6 font-['Open_Sans',sans-serif] text-base leading-6 text-[#7f7f90]">
        <Fit w={83} inner="tracking-[2px]">CONTACT</Fit>
      </div>
      <h2 className="mt-[14px] flex h-[63px] w-[363px] shrink-0 items-baseline whitespace-nowrap font-['Noto_Sans',sans-serif] text-[55px] font-light uppercase leading-[63px] tracking-[0.14em] text-[#212529]">
        <HelpWord w={74} ml={0}>Need</HelpWord>
        <HelpWord w={79} ml={12}>Help?</HelpWord>
        <span className="flex shrink-0 items-baseline font-normal text-[#ff9c08]">
          <HelpWord w={141} ml={11}>Contact</HelpWord>
          <HelpWord w={37} ml={9}>Us</HelpWord>
        </span>
      </h2>
      <div className="relative mt-[49px] h-[265px] w-[1620px] shrink-0 overflow-hidden">
        <MapDrawing />
        <div className="absolute left-[13px] top-[13px] h-[79px] w-[41px] rounded-[5px] border-2 border-black/25 bg-clip-padding text-black">
          <div className="flex h-[38px] items-center justify-center rounded-t-[3px] border-b border-[#ccc] bg-white">
            <svg className="ml-px" width="16" height="16" viewBox="0 0 16 16"><path d="M8 0.500V15.500M0.500 8H15.500" stroke="#000" strokeWidth="2.200" /></svg>
          </div>
          <div className="flex h-[37px] items-center justify-center rounded-b-[3px] bg-white pb-px">
            <svg className="ml-px" width="16" height="16" viewBox="0 0 16 16"><path d="M0.500 8H15.500" stroke="#000" strokeWidth="2.200" /></svg>
          </div>
        </div>
        <div className="absolute left-[746px] top-[65px] h-[76px] w-[160px] rounded-[15px] bg-white pl-[26px] pt-[17px] font-['Liberation_Sans',sans-serif] text-base leading-[22px] text-[#333] shadow-[0_3px_16px_rgba(0,0,0,0.4)]">
          <div className="font-bold text-[#2b2b2b]"><Fit w={101}>FOOD TIGER</Fit></div>
          <div><Fit w={82}>Main Office</Fit></div>
          <svg className="absolute left-[139px] top-[11px]" width="11" height="11" viewBox="0 0 11 11" stroke="#757575" strokeWidth="1.500">
            <path d="M1 1L10 10M10 1L1 10" />
          </svg>
          <svg className="absolute left-[68px] top-[75px]" width="24" height="12" viewBox="0 0 24 12"><path d="M0 0H24L14 10Q12 12 10 10Z" fill="#fff" /></svg>
        </div>
      </div>
    </section>
  );
}

function Scrollbar() {
  return (
    <div className="flex w-[17px] shrink-0 flex-col items-center bg-[#f1f1f1]">
      <svg width="17" height="17" viewBox="0 0 17 17"><path d="M5 11H12L8.500 7Z" fill="#a3a3a3" /></svg>
      <div className="h-[568px] w-[13px] bg-[#c1c1c1]" />
      <svg className="mt-auto" width="17" height="17" viewBox="0 0 17 17"><path d="M5 6.500H12L8.500 10.500Z" fill="#505050" /></svg>
    </div>
  );
}

function ChromeLogo({ children }: { children?: ReactNode }) {
  return (
    <svg className="ml-[3px]" width="28" height="26" viewBox="0 0 28 26">
      <circle cx="12" cy="12" r="12" fill="#fff" />
      <path d="M1.600 6A12 12 0 0 0 12 24L17 15L12 12L7 15Z" fill="#2da94f" />
      <path d="M22.400 6A12 12 0 0 1 12 24L17.200 15L12 6Z" fill="#fbc116" />
      <path d="M1.600 6A12 12 0 0 1 22.400 6H12Z" fill="#ea4335" />
      <path d="M1.600 6L6.800 15L12 12V6Z" fill="#ea4335" />
      <path d="M1.600 6A12 12 0 0 0 12 24L6.800 15Z" fill="#2da94f" />
      <circle cx="12" cy="12" r="6" fill="#fff" />
      <circle cx="12" cy="12" r="4.700" fill="#2c7bf2" />
      {children}
    </svg>
  );
}

function TaskItem({ active, running, children }: { active?: boolean; running?: boolean; children: ReactNode }) {
  return (
    <div className={"relative flex h-10 w-[49px] items-center justify-center " + (active ? "bg-[#4d4d4d]" : "")}>
      {children}
      {running && <div className={"absolute bottom-0 h-[2px] bg-[#76b9ed] " + (active ? "inset-x-0" : "left-[4px] right-[5px]")} />}
    </div>
  );
}

function Taskbar() {
  return (
    <footer className="flex h-10 shrink-0 items-center bg-[#1f1f1f] font-['Open_Sans',sans-serif] text-white">
      <div className="flex w-12 items-center justify-center">
        <svg width="16" height="16" viewBox="0 0 16 16" fill="#fff">
          <path d="M0 2.200L6.500 1.300V7.500H0ZM7.500 1.200L16 0V7.500H7.500ZM0 8.500H6.500V14.700L0 13.800ZM7.500 8.500H16V16L7.500 14.800Z" />
        </svg>
      </div>
      <div className="flex h-10 w-[288px] items-center border border-[#b8b8b8] bg-[#f2f2f2] pl-[11px] text-[#303030]">
        <svg width="17" height="17" viewBox="0 0 17 17" fill="none" stroke="#1c1c1c" strokeWidth="1.300">
          <circle cx="10.500" cy="6.500" r="5.500" /><path d="M6.500 10.500L0.500 16.500" />
        </svg>
        <Fit w={128} className="ml-[11px] text-[15px]">Type here to search</Fit>
        <svg className="ml-[49px]" width="66" height="36" viewBox="0 0 66 36">
          <path d="M3 5Q12 9 15 25L8 23Q1 14 3 5Z" fill="#9fcbe0" stroke="#7ba6bd" strokeWidth=".7" />
          <path d="M10 23L15 21L19 30Q18 34 15 32Z" fill="#c08247" />
          <path d="M21 14Q15 9 21 4Q25 1 28 4Q33 -1 38 3Q46 2 47 9Q47 14 42 15V24Q31 27 22 24Z" fill="#d6c3e6" />
          <path d="M22 22Q31 25 42 22V25Q31 28 22 25Z" fill="#af95ca" />
          <path d="M56 16L51 24" stroke="#8a8a8a" strokeWidth="1.500" />
          <path d="M53 23L48 32" stroke="#6fc0ae" strokeWidth="3.500" strokeLinecap="round" />
          <path d="M56 17Q53 8 61 4Q67 3 65 9Q63 17 56 17ZM56 17Q58 8 61 4M56 17Q64 10 65 6M56 17Q56 8 58 6" fill="none" stroke="#7c7c7c" strokeWidth=".8" />
        </svg>
      </div>
      <TaskItem>
        <svg width="17" height="16" viewBox="0 0 17 16" fill="none" stroke="#eee" strokeWidth="1.200">
          <path d="M1 0.500V2.500H11V0.500M1 15.500V13.500H11V15.500M1 4.500H11V11.500H1ZM15 0V16" /><path d="M13.500 5H16.500" strokeWidth="3" />
        </svg>
      </TaskItem>
      <div className="w-[2px]" />
      <TaskItem>
        <svg className="mr-[2px]" width="24" height="24" viewBox="0 0 24 24">
          <path d="M7 5V2Q7 1 8 1H16Q17 1 17 2V5" fill="none" stroke="#1fa0e8" strokeWidth="2" />
          <rect x="0.500" y="4" width="23" height="19.500" rx="3" fill="#f5f5f5" />
          <path d="M7 9H11.500V13.500H7Z" fill="#f25022" /><path d="M12.500 9H17V13.500H12.500Z" fill="#7fba00" />
          <path d="M7 14.500H11.500V19H7Z" fill="#00a4ef" /><path d="M12.500 14.500H17V19H12.500Z" fill="#ffb900" />
        </svg>
      </TaskItem>
      <TaskItem>
        <svg className="mr-[2px]" width="24" height="24" viewBox="0 0 24 24">
          <path d="M0 9L12 1L24 9V14H0Z" fill="#0f6cbd" />
          <path d="M2 9H22V16H2Z" fill="#f2f2f2" />
          <path d="M0 9L12 16.500L24 9V23H0Z" fill="#2aa6ee" />
          <path d="M24 9V23H0L24 12Z" fill="#35bdf8" />
          <path d="M0 23L12 16L24 23Z" fill="#1c88dd" />
        </svg>
      </TaskItem>
      <TaskItem>
        <svg className="mr-[2px]" width="22" height="24" viewBox="0 0 22 24">
          <path d="M11 1L20.500 6V17L11 23L6 20L15 15V9L8 5Z" fill="#6f8bea" />
          <path d="M11 1L1.500 6.500V16L6.500 18V9.500L14 5.500V2.500Z" fill="#8d93f0" />
          <path d="M1.500 15L11 23L20.500 17L15 14.500L8 18.500L6.500 17.500V9Z" fill="#a97bdd" />
          <path d="M13 4L20.500 6.500V17L15 14.500V9L9 6Z" fill="#45b9ee" />
          <path d="M8 9.500L11.500 7.500L15 9.500V14L11 16.500L7.500 14.500Z" fill="#1f1f1f" />
        </svg>
      </TaskItem>
      <TaskItem>
        <svg className="mr-[2px]" width="24" height="24" viewBox="0 0 24 24">
          <circle cx="12" cy="12" r="12" fill="#1a6fc9" />
          <path d="M0.300 10C2 3 7 0 12 0C19 0 24 5 24 10.500C24 14 21 16 18 16C15 16 14 15 14.500 13C16 9 12 7 9 7C4 7 1 9 0.300 10Z" fill="#3cc6c9" />
          <path d="M13 0C20 0 24 5 24 10.500C24 14 21 16 18 16C15 16 14 15 14.500 13C18 12 19 5 13 0Z" fill="#62d872" />
          <path d="M9 9C5 13 8 22 17 22.800C11 25 3 23 1 16C2 11 5 8.500 9 9Z" fill="#1f8fe6" />
          <path d="M9.500 12C8 18 14 21 21.500 18C19 22 16 23.500 14 23C8 21 7 15 9.500 12Z" fill="#13478f" />
        </svg>
      </TaskItem>
      <TaskItem running>
        <svg className="mr-[2px]" width="22" height="18" viewBox="0 0 22 18">
          <path d="M0 1Q0 0 1 0H8L10 2H21Q22 2 22 3V17H0Z" fill="#e5a318" />
          <path d="M0 4H22V17Q22 18 21 18H1Q0 18 0 17Z" fill="#fdd667" />
          <path d="M4 18V11Q4 10 5 10H17Q18 10 18 11V18H14.500V14H7.500V18Z" fill="#3b97d8" />
        </svg>
      </TaskItem>
      <TaskItem active running>
        <ChromeLogo>
          <circle cx="18" cy="18" r="7.500" fill="#2a2423" /><path d="M14 18H22V23Q18 27 14 23Z" fill="#a9d0e3" /><path d="M14 14H22V18H14Z" fill="#6a463c" />
          <path d="M11 13Q18 7 24 14L22 16Q18 13 13 16Z" fill="#0d0d0d" />
        </ChromeLogo>
      </TaskItem>
      <TaskItem>
        <ChromeLogo>
          <circle cx="18" cy="18" r="6" fill="#9b9690" /><path d="M14 16Q18 12 21 17L19 23L16 23Z" fill="#cfc8bf" /><path d="M19 13L23 18L20 23" stroke="#67625d" fill="none" />
        </ChromeLogo>
      </TaskItem>
      <TaskItem>
        <ChromeLogo>
          <circle cx="18" cy="18" r="6" fill="#f2f2f2" /><circle cx="18" cy="16" r="2.500" fill="#d9a98e" /><path d="M15.500 15Q18 11 20.500 15Z" fill="#2b211d" /><path d="M17 19L18 23L19 19Z" fill="#333" />
        </ChromeLogo>
      </TaskItem>
      <TaskItem running>
        <svg className="mr-[2px]" width="24" height="24" viewBox="0 0 24 24">
          <path d="M17.500 0.500L24 3V21L17.500 23.800Z" fill="#2aa5ee" />
          <path d="M17.500 0.500L1 15.500Q0 16.500 1 17.500L2 18.300Q3 19 4 18L17.500 8Z" fill="#0a74bd" />
          <path d="M17.500 23.800L1 8.500Q0 7.500 1 6.500L2 5.700Q3 5 4 6L17.500 16Z" fill="#1389d3" />
        </svg>
      </TaskItem>
      <TaskItem running>
        <svg className="mr-[2px]" width="19" height="19" viewBox="0 0 19 19" stroke="#fff" fill="none">
          <circle cx="9.500" cy="9.500" r="5.400" strokeWidth="2.200" />
          {[0, 45, 90, 135, 180, 225, 270, 315].map((a) => (
            <path key={a} d="M9.500 0.500V4" strokeWidth="3.400" transform={`rotate(${a} 9.5 9.5)`} />
          ))}
        </svg>
      </TaskItem>
      <TaskItem running>
        <svg className="mr-[2px]" width="24" height="24" viewBox="0 0 24 24">
          <rect width="24" height="24" rx="3" fill="#f37623" />
          <path d="M2 2H22" stroke="#fbb98a" />
          <path d="M8 6.500Q4.500 6 5 9Q5.500 11 8 11.500H16Q19 11 19 8.500Q19 6 16 6.500Q13 7 12 10Q11 7 8 6.500ZM8 12Q4.500 13 5 16Q6 19.500 9 17.500L12 15L15 17.500Q18.500 19.500 19 16Q19 13 16 12" fill="none" stroke="#fff" strokeWidth="2.600" strokeLinejoin="round" />
        </svg>
      </TaskItem>
      <div className="ml-auto flex items-center">
        <svg width="25" height="23" viewBox="0 0 25 23">
          <path d="M19 6A10.500 10.500 0 0 1 2 16A11 11 0 0 0 19 6Z" fill="#f59a23" />
          <path d="M4 8Q0 8 0 5Q1 2 4 3Q6 -1 10 2Q14 3 13 6Q12 8 10 8Z" fill="#c3d8f7" />
          <path d="M14 21Q10 21 10 18Q11 15 14 15Q17 10 21 14Q25 16 24 19Q23 21 21 21Z" fill="#a9c8f2" />
          <circle cx="18" cy="6" r="5.700" fill="#c42b1c" />
          <path d="M16.800 4.500L18.300 3.500V9" fill="none" stroke="#fff" />
        </svg>
        <Fit w={29} className="ml-[8px] text-[14px]">28°C</Fit>
        <Fit w={79} className="ml-[9px] text-[14px]">Partly cloudy</Fit>
        <svg className="ml-[24px]" width="13" height="8" viewBox="0 0 13 8" fill="none" stroke="#fff" strokeWidth="1.300"><path d="M1 7L6.500 1.500L12 7" /></svg>
        <svg className="ml-[12px]" width="12" height="16" viewBox="0 0 12 16" fill="none" stroke="#fff">
          <rect x="1" y="4.500" width="7" height="7" rx="1" /><path d="M8 7L11 5.500V10.500L8 9M2 2Q5.500 -0.500 9 2M2 14Q5.500 16.500 9 14" />
        </svg>
        <svg className="ml-[10px]" width="17" height="11" viewBox="0 0 17 11">
          <path d="M4 11Q0 11 0 7.500Q1 4.500 4 4.500Q5 0 9 0Q12 0 13 4Q17 4 17 8Q16 11 14 11Z" fill="#b9b9b9" /><path d="M4 11Q0 11 0.500 8Q2 5 5 6L15 10.500Q14 11 13 11Z" fill="#fff" />
        </svg>
        <svg className="ml-[7px]" width="17" height="16" viewBox="0 0 17 16" fill="none" stroke="#fff">
          <path d="M10 13.500L1 12.500V2.500L15.500 0.500V8M1 13V15H8" /><path d="M5 8Q5 5 8 4.500L10 5.500M11 6Q11 9.500 8 10L6 9" /><circle cx="12.500" cy="12.500" r="3.500" fill="#f7940a" stroke="none" />
        </svg>
        <svg className="ml-[7px]" width="17" height="15" viewBox="0 0 17 15" fill="none" stroke="#fff">
          <path d="M5 2.500H16.500V10.500H3.500V6M10 10.500V13.500M6.500 13.500H13.500M0.500 0.500H4.500V4.500H0.500ZM2.500 4.500V9" />
        </svg>
        <svg className="ml-[7px]" width="17" height="13" viewBox="0 0 17 13" fill="none" stroke="#fff">
          <path d="M0.500 4.500H3L6.500 1V12L3 8.500H0.500ZM8.500 4.500Q10 6.500 8.500 8.500M11 3Q13.500 6.500 11 10M13.500 1Q17.500 6.500 13.500 12" />
        </svg>
        <div className="ml-[10px] flex w-[52px] flex-col items-center text-xs leading-[18px]">
          <Fit w={43}>8:17 PM</Fit>
          <Fit w={52}>6/12/2024</Fit>
        </div>
        <svg className="ml-[17px]" width="25" height="26" viewBox="0 0 25 26">
          <path d="M1 2H17V14H8L4 18V14H1Z" fill="#fff" />
          <path d="M3.500 5.500H14.500M3.500 8.500H14.500M3.500 11.500H11" stroke="#1f1f1f" />
          <circle cx="16.500" cy="17.500" r="7.500" fill="#333" stroke="#8d8d8d" />
          <text x="16.500" y="22" textAnchor="middle" fontFamily="'Open Sans', sans-serif" fontSize="12" fontWeight="600" fill="#fff">4</text>
        </svg>
        <div className="ml-[11px] mr-[4px] h-10 w-px bg-[#5f5f5f]" />
      </div>
    </footer>
  );
}

export default function App() {
  return (
    <div className="flex h-[1440px] w-[2560px] flex-col overflow-hidden bg-white">
      <BrowserChrome />
      <div className="flex min-h-0 flex-1">
        <main className="flex min-w-0 flex-1 flex-col overflow-hidden">
          <SiteHeader />
          <Hero />
          <ContactSection />
        </main>
        <Scrollbar />
      </div>
      <Taskbar />
    </div>
  );
}
